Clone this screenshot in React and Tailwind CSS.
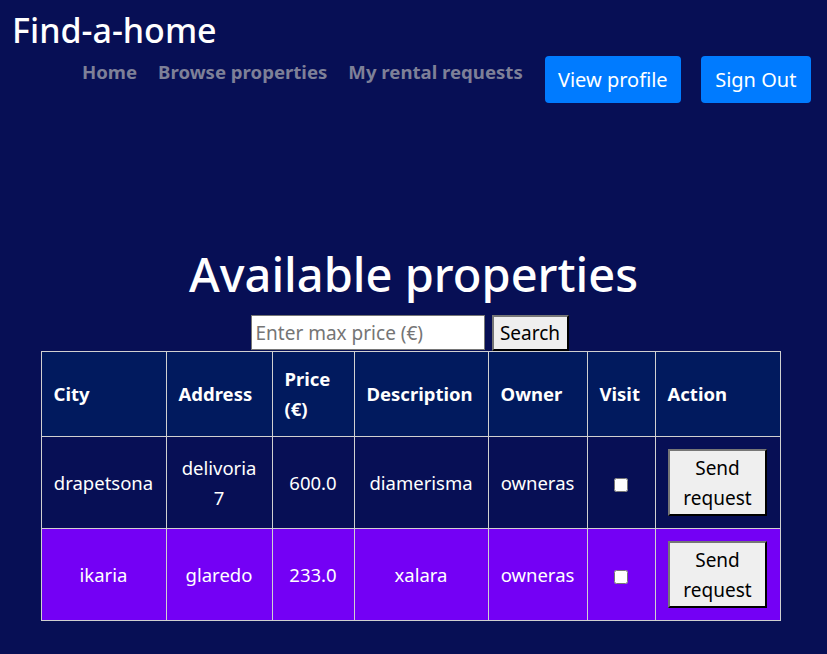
import React from 'react';

const rows = [
  { city: 'drapetsona', address: 'delivoria 7', price: '600.0', desc: 'diamerisma', owner: 'owneras', highlight: false },
  { city: 'ikaria', address: 'glaredo', price: '233.0', desc: 'xalara', owner: 'owneras', highlight: true },
];

const cols = [
  { label: 'City', w: 'w-[125px]' },
  { label: 'Address', w: 'w-[106px]' },
  { label: 'Price (€)', w: 'w-[82px]' },
  { label: 'Description', w: 'w-[134px]' },
  { label: 'Owner', w: 'w-[99px]' },
  { label: 'Visit', w: 'w-[68px]' },
  { label: 'Action', w: 'w-[125px]' },
];

const nativeBtn =
  'bg-[#efefef] text-black border-2 border-t-[#767676] border-l-[#767676] border-r-black border-b-black';

export default function App() {
  return (
    <div className="min-h-[654px] bg-[#070f55] text-white font-['Noto_Sans',sans-serif]">
      <header className="px-3 pt-[8px]">
        <h1 className="text-[34px] leading-[44px] font-medium">Find-a-home</h1>
        <nav className="flex items-start ml-[70px] mt-[4px] whitespace-nowrap">
          <div className="flex shrink-0 gap-[21px] pt-[2px] text-[18.6px] font-bold text-[#7e8098]">
            <a href="#">Home</a>
            <a href="#">Browse properties</a>
            <a href="#">My rental requests</a>
          </div>
          <button className="shrink-0 ml-[22px] h-[47px] w-[136px] rounded-[4px] bg-[#007bff] text-[20px]">
            View profile
          </button>
          <button className="shrink-0 ml-[20px] h-[47px] w-[110px] rounded-[4px] bg-[#007bff] text-[20px]">
            Sign Out
          </button>
        </nav>
      </header>

      <main className="flex flex-col items-center pt-[142px]">
        <h2 className="text-[47px] leading-[58px] font-medium">Available properties</h2>
        <div className="flex gap-[7px] mt-[12px] ml-[-8px]">
          <input
            className="w-[234px] h-[35px] bg-white border border-[#767676] px-[4px] text-[19px] text-black placeholder:text-[#757575]"
            placeholder="Enter max price (€)"
          />
          <button className={`${nativeBtn} w-[77px] h-[36px] text-[19px]`}>Search</button>
        </div>
        <table className="table-fixed w-[739px] border-collapse text-[18.5px] leading-[30px] ml-[-6px]">
          <thead>
            <tr className="bg-[#011a5e]">
              {cols.map((c) => (
                <th key={c.label} className={`${c.w} border border-[#d0d0d0] px-[12px] py-[12px] text-left font-bold`}>
                  {c.label}
                </th>
              ))}
            </tr>
          </thead>
          <tbody>
            {rows.map((r, i) => (
              <tr key={i} className={r.highlight ? 'bg-[#7400f5]' : 'bg-[#070f55]'}>
                <td className="border border-[#d0d0d0] px-[12px] py-[12px] text-center">{r.city}</td>
                <td className="border border-[#d0d0d0] px-[12px] py-[12px] text-center">{r.address}</td>
                <td className="border border-[#d0d0d0] px-[12px] py-[12px] text-center">{r.price}</td>
                <td className="border border-[#d0d0d0] px-[12px] py-[12px] text-center">{r.desc}</td>
                <td className="border border-[#d0d0d0] px-[12px] py-[12px] text-center">{r.owner}</td>
                <td className="border border-[#d0d0d0] px-[12px] py-[12px] text-center">
                  <input type="checkbox" className="w-[14px] h-[14px] align-middle" />
                </td>
                <td className="border border-[#d0d0d0] px-[12px] py-[12px] text-center">
                  <button className={`${nativeBtn} w-[99px] h-[67px] text-[19px] leading-[30px]`}>
                    Send
                    <br />
                    request
                  </button>
                </td>
              </tr>
            ))}
          </tbody>
        </table>
      </main>
    </div>
  );
}
